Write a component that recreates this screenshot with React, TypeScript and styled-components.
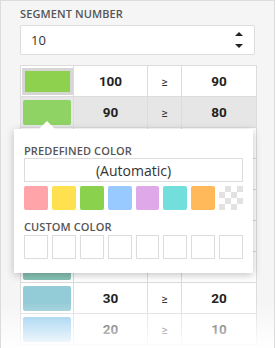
import * as React from "react";
import styled, { createGlobalStyle } from "styled-components";

const GlobalStyle = createGlobalStyle`
    html, body {
        margin: 0;
        padding: 0;
        background: #fff;
    }
    body {
        font-family: "Open Sans", "Liberation Sans", sans-serif;
    }
`;

const Panel = styled.div`
    position: relative;
    box-sizing: border-box;
    width: 275px;
    height: 348px;
    overflow: hidden;
    background: #f5f5f5;
    border: 1px solid #dcdcdc;
    border-bottom: none;
    padding: 5px 19px 0 19px;
`;

const Label = styled.div`
    font-size: 11px;
    font-weight: 600;
    color: #555;
    line-height: 15px;
    letter-spacing: 0.1px;
`;

const SpinBox = styled.div`
    box-sizing: border-box;
    margin-top: 4px;
    height: 30px;
    display: flex;
    align-items: center;
    justify-content: space-between;
    background: #fff;
    border: 1px solid #dcdcdc;
    border-radius: 2px;
    padding: 0 11px 0 10px;
    font-size: 13px;
    color: #333;
`;

const Spinner = styled.div`
    display: flex;
    flex-direction: column;
    gap: 8px;
`;

const Arrow = styled.div<{ $down?: boolean }>`
    width: 0;
    height: 0;
    border-left: 4px solid transparent;
    border-right: 4px solid transparent;
    ${p => p.$down ? "border-top: 4px solid #222;" : "border-bottom: 4px solid #222;"}
`;

const Table = styled.table`
    margin-top: 10px;
    width: 236px;
    border-collapse: collapse;
    background: #fff;
    table-layout: fixed;
`;

const Row = styled.tr<{ $selected?: boolean }>`
    height: 31px;
    background: ${p => p.$selected ? "#e6e6e6" : "#fff"};
`;

const Cell = styled.td<{ $w: number }>`
    width: ${p => p.$w}px;
    box-sizing: border-box;
    border: 1px solid #dcdcdc;
    padding: 0;
    text-align: center;
    font-family: "Roboto", "Liberation Sans", sans-serif;
    font-weight: 700;
    font-size: 13.5px;
    color: #222;
`;

const Ge = styled.span`
    font-weight: 400;
    font-size: 12px;
    color: #333;
`;

const Swatch = styled.div<{ $framed?: boolean }>`
    box-sizing: border-box;
    margin: 0 auto;
    width: ${p => p.$framed ? 51 : 48}px;
    height: ${p => p.$framed ? 27 : 25}px;
    border-radius: 2px;
    ${p => p.$framed ? "border: 3px solid #d6d6d6; border-radius: 0;" : ""}
`;

const Popup = styled.div`
    position: absolute;
    left: 13px;
    top: 128px;
    box-sizing: border-box;
    width: 239px;
    height: 144px;
    background: #fff;
    box-shadow: 0 2px 8px rgba(0, 0, 0, 0.24);
    padding: 14px 10px 0 10px;
    &::before {
        content: "";
        position: absolute;
        top: -8px;
        left: 25px;
        width: 0;
        height: 0;
        border-left: 8px solid transparent;
        border-right: 8px solid transparent;
        border-bottom: 8px solid #fff;
    }
`;

const AutoBox = styled.div`
    box-sizing: border-box;
    margin-top: 0;
    height: 24px;
    border: 1px solid #dcdcdc;
    display: flex;
    align-items: center;
    justify-content: center;
    font-size: 14px;
    color: #333;
`;

const SwatchGrid = styled.div<{ $top: number }>`
    display: flex;
    gap: 4px;
    margin-top: ${p => p.$top}px;
`;

const ColorCell = styled.div<{ $color?: string; $empty?: boolean; $none?: boolean }>`
    box-sizing: border-box;
    width: 24px;
    height: 24px;
    border-radius: ${p => p.$empty ? 0 : 2}px;
    background: ${p => p.$color || "#fff"};
    ${p => p.$empty ? "border: 1px solid #dcdcdc;" : ""}
    ${p => p.$none ? `
        background-color: #fff;
        background-image:
            linear-gradient(45deg, #e2e2e2 25%, transparent 25%, transparent 75%, #e2e2e2 75%),
            linear-gradient(45deg, #e2e2e2 25%, transparent 25%, transparent 75%, #e2e2e2 75%);
        background-size: 12px 12px;
        background-position: 0 0, 6px 6px;
        border-radius: 0;
    ` : ""}
`;

const CustomLabel = styled(Label)`
    margin-top: 9px;
`;

const Fade = styled.div`
    position: absolute;
    left: -1px;
    right: -1px;
    bottom: 0;
    height: 46px;
    background: linear-gradient(rgba(255, 255, 255, 0), rgba(255, 255, 255, 0.97));
`;

const segments = [
    { from: 100, to: 90, color: "#8dd14f" },
    { from: 90, to: 80, color: "#8fd365" },
    { from: 80, to: 70, color: "#8ecf7a" },
    { from: 70, to: 60, color: "#8ccb8c" },
    { from: 60, to: 50, color: "#8ac79e" },
    { from: 50, to: 40, color: "#88c5ac" },
    { from: 40, to: 30, color: "#87c3b6" },
    { from: 30, to: 20, color: "#93cbd6" },
    { from: 20, to: 10, color: "#8ec9ec" },
];

const predefined = ["#ffa5aa", "#ffe04f", "#8ad14e", "#99caff", "#dfa8e8", "#72dfdc", "#ffb85a"];

export default function App() {
    return <>
        <GlobalStyle />
        <Panel>
            <Label>SEGMENT NUMBER</Label>
            <SpinBox>
                <span>10</span>
                <Spinner>
                    <Arrow />
                    <Arrow $down />
                </Spinner>
            </SpinBox>
            <Table>
                <tbody>
                    {segments.map((s, i) => <Row key={s.from} $selected={i === 1}>
                        <Cell $w={53}><Swatch $framed={i === 0} style={{ background: s.color }} /></Cell>
                        <Cell $w={74}>{s.from}</Cell>
                        <Cell $w={34}><Ge>≥</Ge></Cell>
                        <Cell $w={75}>{s.to}</Cell>
                    </Row>)}
                </tbody>
            </Table>
            <Popup>
                <Label>PREDEFINED COLOR</Label>
                <AutoBox>(Automatic)</AutoBox>
                <SwatchGrid $top={4}>
                    {predefined.map(c => <ColorCell key={c} $color={c} />)}
                    <ColorCell $none />
                </SwatchGrid>
                <CustomLabel>CUSTOM COLOR</CustomLabel>
                <SwatchGrid $top={1}>
                    {Array.from({ length: 8 }).map((_, i) => <ColorCell key={i} $empty />)}
                </SwatchGrid>
            </Popup>
            <Fade />
        </Panel>
    </>;
}
